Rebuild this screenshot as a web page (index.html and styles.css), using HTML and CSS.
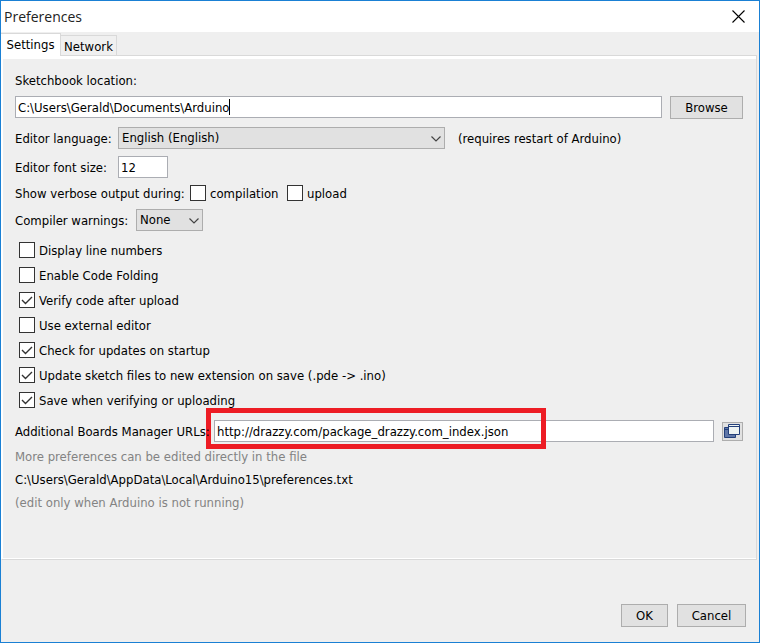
FILE: index.html
```html
<!DOCTYPE html>
<html lang="en">
<head>
<meta charset="utf-8">
<title>Preferences</title>
<link rel="stylesheet" href="styles.css">
</head>
<body>
<main class="window">
  <header class="titlebar">
    <h1 class="title">Preferences</h1>
    <button class="close" type="button" aria-label="Close">
      <svg width="13" height="13" viewBox="0 0 13 13"><path d="M.5.5l12 12M12.5.5l-12 12" stroke="#000" stroke-width="1.1" fill="none"/></svg>
    </button>
  </header>

  <div class="tabs" role="tablist">
    <button class="tab tab-active" type="button" role="tab" aria-selected="true">Settings</button>
    <button class="tab" type="button" role="tab" aria-selected="false">Network</button>
  </div>

  <form class="panel">
    <label class="line" for="sketchbook">Sketchbook location:</label>
    <div class="row row-location">
      <div class="field">
        <input class="text" id="sketchbook" type="text" value="C:\Users\Gerald\Documents\Arduino">
        <span class="caret"></span>
      </div>
      <button class="button" type="button">Browse</button>
    </div>
    <div class="row">
      <label class="label label-editor" for="language">Editor language:</label>
      <div class="dropdown dropdown-language">
        <select class="select" id="language"><option>English (English)</option></select>
        <svg class="chevron" width="10" height="6" viewBox="0 0 10 6"><path d="M.5.5L5 5 9.500.5" stroke="#444" stroke-width="1.2" fill="none"/></svg>
      </div>
      <span class="label note">(requires restart of Arduino)</span>
    </div>
    <div class="row">
      <label class="label label-editor" for="fontsize">Editor font size:</label>
      <input class="text text-size" id="fontsize" type="text" value="12">
    </div>
    <div class="row row-verbose">
      <span class="label label-verbose">Show verbose output during:</span>
      <label class="check check-compilation"><span class="box"><input type="checkbox"></span><span class="label">compilation</span></label>
      <label class="check"><span class="box"><input type="checkbox"></span><span class="label">upload</span></label>
    </div>
    <div class="row">
      <label class="label label-warnings" for="warnings">Compiler warnings:</label>
      <div class="dropdown dropdown-warnings">
        <select class="select" id="warnings"><option>None</option></select>
        <svg class="chevron" width="10" height="6" viewBox="0 0 10 6"><path d="M.5.5L5 5 9.500.5" stroke="#444" stroke-width="1.2" fill="none"/></svg>
      </div>
    </div>

    <div class="checks">
      <label class="check"><span class="box"><input type="checkbox"></span><span class="label">Display line numbers</span></label>
      <label class="check"><span class="box"><input type="checkbox"></span><span class="label">Enable Code Folding</span></label>
      <label class="check"><span class="box"><input type="checkbox" checked><svg class="tick" viewBox="0 0 16 16"><path d="M3 8l3.500 3.500L13 5"/></svg></span><span class="label">Verify code after upload</span></label>
      <label class="check"><span class="box"><input type="checkbox"></span><span class="label">Use external editor</span></label>
      <label class="check"><span class="box"><input type="checkbox" checked><svg class="tick" viewBox="0 0 16 16"><path d="M3 8l3.500 3.500L13 5"/></svg></span><span class="label">Check for updates on startup</span></label>
      <label class="check"><span class="box"><input type="checkbox" checked><svg class="tick" viewBox="0 0 16 16"><path d="M3 8l3.500 3.500L13 5"/></svg></span><span class="label">Update sketch files to new extension on save (.pde -&gt; .ino)</span></label>
      <label class="check"><span class="box"><input type="checkbox" checked><svg class="tick" viewBox="0 0 16 16"><path d="M3 8l3.500 3.500L13 5"/></svg></span><span class="label">Save when verifying or uploading</span></label>
    </div>

    <div class="row">
      <label class="label label-urls" for="urls">Additional Boards Manager URLs:</label>
      <div class="field">
        <input class="text" id="urls" type="text" value="http://drazzy.com/package_drazzy.com_index.json">
        <span class="highlight"></span>
      </div>
      <button class="icon-button" type="button" aria-label="Edit URLs">
        <svg width="16" height="14" viewBox="0 0 16 14">
          <path d="M.5 3.500h11v10H.5z" fill="#6077a8" stroke="#24407a"/>
          <path d="M1 5.500h4" stroke="#24407a"/>
          <path d="M4.500.5h11v10h-11z" fill="#eef3f2" stroke="#24407a"/>
          <path d="M5 2.500h10" stroke="#24407a"/>
        </svg>
      </button>
    </div>
    <p class="hint">More preferences can be edited directly in the file</p>
    <p class="hint hint-path">C:\Users\Gerald\AppData\Local\Arduino15\preferences.txt</p>
    <p class="hint">(edit only when Arduino is not running)</p>
  </form>

  <footer class="actions">
    <button class="button button-ok" type="button">OK</button>
    <button class="button button-cancel" type="button">Cancel</button>
  </footer>
</main>
</body>
</html>
```
FILE: styles.css
```css
* {
  box-sizing: border-box;
}

body {
  margin: 0;
  font: 13px/16px "DejaVu Sans Condensed", "DejaVu Sans", sans-serif;
  color: #000;
}

button, input, select {
  font: inherit;
  color: inherit;
  margin: 0;
}

.window {
  display: flex;
  flex-direction: column;
  min-height: 100vh;
  border: 1px solid #1a80d4;
  background: #efefef;
}

.titlebar {
  display: flex;
  align-items: center;
  justify-content: space-between;
  height: 31px;
  padding: 0 14px 0 3px;
  background: #fff;
}

.title {
  margin: 0;
  font: 14px/20px "Open Sans", sans-serif;
  color: #222;
}

.close {
  display: flex;
  padding: 0;
  border: 0;
  background: none;
}

.tabs {
  display: flex;
  align-items: flex-end;
  height: 22px;
  margin-top: 1px;
}

.tab {
  width: 56px;
  height: 20px;
  padding: 2px 0 0;
  border: 1px solid #d9d9d9;
  border-left: 0;
  border-bottom: 0;
  background: #f0f0f0;
}

.tab-active {
  z-index: 1;
  height: 23px;
  width: 60px;
  margin-bottom: -1px;
  padding: 0 0 1px;
  background: #fff;
}

.panel {
  display: flex;
  flex-direction: column;
  gap: 7px;
  min-height: 505px;
  margin-right: 2px;
  padding: 15px 13px 0;
  border: 1px solid #d9d9d9;
  border-left-color: #fff;
  box-shadow: inset 0 3px #fff, inset 1px 0 #fff, inset 0 -1px #fff;
}

.line {
  height: 18px;
  padding-top: 2px;
}

.row {
  display: flex;
  align-items: center;
  height: 22px;
}

.row-location {
  align-items: flex-start;
  gap: 8px;
  height: 24px;
}

.row-verbose {
  height: 16px;
  margin-bottom: 1px;
}

.label {
  padding-top: 2px;
  white-space: nowrap;
}

.label-editor { width: 103px; }
.label-verbose { width: 175px; }
.label-warnings { width: 121px; }

.label-urls {
  position: relative;
  z-index: 1;
  width: 199px;
}

.field {
  position: relative;
  flex: 1;
}

.text {
  display: block;
  width: 100%;
  height: 22px;
  padding: 0 2px;
  border: 1px solid #abadb3;
  border-radius: 0;
  background: #fff;
}

.text-size { width: 50px; }

.caret {
  position: absolute;
  top: 3px;
  left: 214px;
  width: 1px;
  height: 16px;
  background: #000;
}

.button {
  width: 73px;
  height: 23px;
  padding: 0;
  border: 1px solid #adadad;
  background: #e1e1e1;
}

.dropdown { position: relative; }
.dropdown-language { width: 327px; }
.dropdown-warnings { width: 67px; }

.select {
  display: block;
  appearance: none;
  width: 100%;
  height: 22px;
  padding: 0 3px;
  border: 1px solid #adadad;
  border-radius: 0;
  background: #e1e1e1;
}

.chevron {
  position: absolute;
  top: 9px;
  right: 4px;
  pointer-events: none;
}

.note { margin-left: 13px; }

.checks {
  display: flex;
  flex-direction: column;
  align-items: flex-start;
  gap: 7px;
  padding: 3px 4px 4px;
}

.check {
  display: flex;
  align-items: center;
  gap: 4px;
  height: 18px;
}

.check-compilation { width: 97px; }

.box {
  position: relative;
  width: 16px;
  height: 16px;
}

.box input {
  display: block;
  appearance: none;
  width: 16px;
  height: 16px;
  border: 1px solid #333;
  background: #fff;
}

.tick {
  position: absolute;
  inset: 0;
  fill: none;
  stroke: #333;
  stroke-width: 1.4;
  pointer-events: none;
}

.highlight {
  position: absolute;
  top: -12px;
  left: -8px;
  width: 340px;
  height: 41px;
  border: 5px solid #ed1c24;
  pointer-events: none;
}

.icon-button {
  display: flex;
  align-items: center;
  justify-content: center;
  width: 21px;
  height: 19px;
  margin-left: 8px;
  padding: 0 1px 1px 0;
  border: 1px solid #adadad;
  background: #e1e1e1;
}

.icon-button svg { flex: none; }

.hint {
  margin: 0;
  color: #838383;
}

.hint-path { color: #000; }

.actions {
  display: flex;
  justify-content: flex-end;
  gap: 9px;
  margin-top: auto;
  padding: 0 13px 15px;
}

.button-ok { width: 47px; }
.button-cancel { width: 69px; }
```
